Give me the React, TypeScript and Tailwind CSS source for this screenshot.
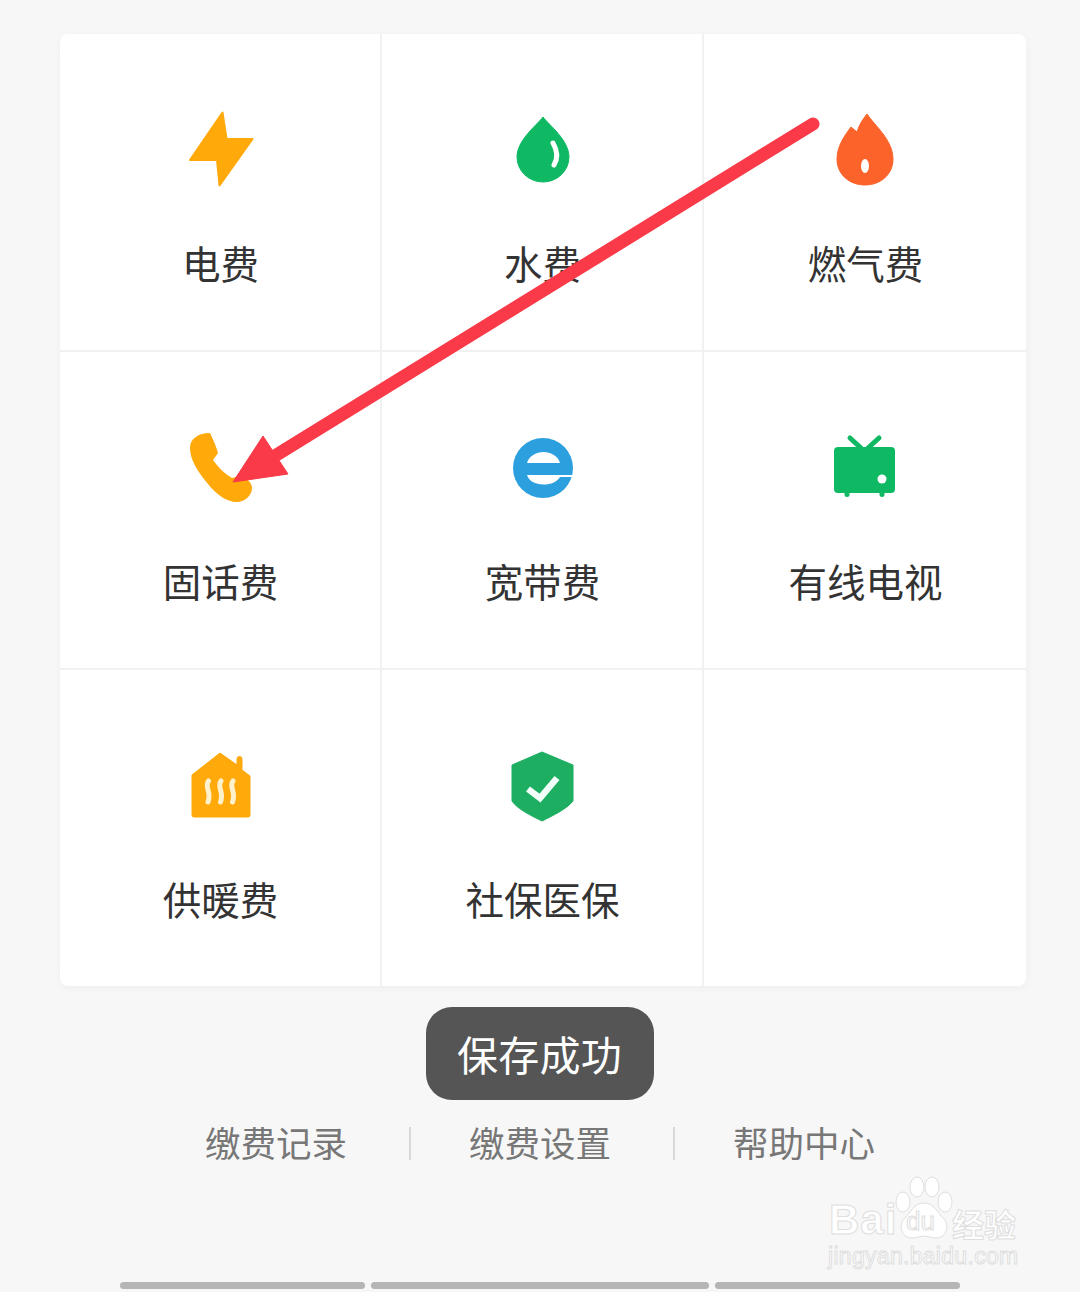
const ORANGE = '#ffa90a';
const GREEN = '#0fb964';

function BoltIcon() {
  return (
    <svg viewBox="0 0 80 80" className="h-20 w-20">
      <path d="M42.5 2.5 46.5 29H72.5L39.5 75.5 37 50H10Z" fill={ORANGE} stroke={ORANGE} strokeWidth={2} strokeLinejoin="round" />
    </svg>
  );
}

function WaterIcon() {
  return (
    <svg viewBox="0 0 80 80" className="h-20 w-20">
      <path d="M41 7C47 15 67 30 67 47A26 25 0 0 1 15 47C15 30 35 15 41 7Z" fill={GREEN} stroke={GREEN} strokeWidth={1} strokeLinejoin="round" />
      <path d="M51 33Q58 45 52 55" fill="none" stroke="#fff" strokeWidth={5} strokeLinecap="round" />
    </svg>
  );
}

function FlameIcon() {
  return (
    <svg viewBox="0 0 80 80" className="h-20 w-20">
      <path d="M42 4C50 16 68 30 68 49C68 65 55 75 40 75C25 75 12 65 12 49C12 36 20 25 26 17L32 22C34 15 38 9 42 4Z" fill="#fb632b" stroke="#fb632b" strokeWidth={1} strokeLinejoin="round" />
      <ellipse cx={40} cy={56} rx={4} ry={7} fill="#fff" />
    </svg>
  );
}

function PhoneIcon() {
  return (
    <svg viewBox="0 0 80 80" className="h-20 w-20">
      <path d="M10 18C10 9 18 3 30 3C33 9 36 16 38 23L33 30C38 37 45 44 52 48L60 46C66 48 72 52 72 58C72 66 64 72 57 72C46 72 36 64 28 54C18 42 10 30 10 18Z" fill={ORANGE} />
    </svg>
  );
}

function BroadbandIcon() {
  return (
    <svg viewBox="0 0 80 80" className="h-20 w-20">
      <circle cx={41} cy={38} r={30} fill="#2c9fdf" />
      <path d="M25 33H58C56 26 49 22 41.5 22C34 22 27 26 25 33Z" fill="#fff" />
      <path d="M25 45H72V47H58C55 52 49 54.5 41.5 54.5C33 54.5 27 51 25 45Z" fill="#fff" />
    </svg>
  );
}

function TvIcon() {
  return (
    <svg viewBox="0 0 80 80" className="h-20 w-20">
      <path d="M25 8 36 18M54 8 43 18" stroke={GREEN} strokeWidth={5} strokeLinecap="round" />
      <rect x={9} y={17} width={61} height={46} rx={4} fill={GREEN} />
      <rect x={19.5} y={60} width={5} height={7} rx={2.5} fill={GREEN} />
      <rect x={54.5} y={60} width={5} height={7} rx={2.5} fill={GREEN} />
      <circle cx={57} cy={49} r={4.5} fill="#fff" />
    </svg>
  );
}

function HeatIcon() {
  return (
    <svg viewBox="0 0 80 80" className="h-20 w-20">
      <path d="M40 3 57 15V9A2.5 2.5 0 0 1 62 9V20L70 26V65A2 2 0 0 1 68 67H14A2 2 0 0 1 12 65V25Z" fill={ORANGE} stroke={ORANGE} strokeWidth={1} strokeLinejoin="round" />
      <path d="M28.5 31C24 37 32 42 28 52M41 31C36.5 37 44.5 42 40.5 52M53 31C48.5 37 56.5 42 52.5 52" fill="none" stroke="#fff1cc" strokeWidth={5} strokeLinecap="round" />
    </svg>
  );
}

function ShieldIcon() {
  return (
    <svg viewBox="0 0 80 80" className="h-20 w-20">
      <path d="M40 2 71 15V51C65 59 50 66 40 71C30 66 15 59 10 51V15Z" fill="#1eae62" stroke="#1eae62" strokeWidth={1} strokeLinejoin="round" />
      <path d="M26 39 38 48 55 28" fill="none" stroke="#f2fff8" strokeWidth={6.5} />
    </svg>
  );
}

const ITEMS = [
  { label: '电费', icon: <BoltIcon /> },
  { label: '水费', icon: <WaterIcon /> },
  { label: '燃气费', icon: <FlameIcon /> },
  { label: '固话费', icon: <PhoneIcon /> },
  { label: '宽带费', icon: <BroadbandIcon /> },
  { label: '有线电视', icon: <TvIcon /> },
  { label: '供暖费', icon: <HeatIcon /> },
  { label: '社保医保', icon: <ShieldIcon /> },
];

function Arrow() {
  return (
    <svg viewBox="0 0 1080 1292" className="pointer-events-none absolute inset-0 h-[1292px] w-[1080px]">
      <path d="M813 124 265 462" stroke="#fa3a48" strokeWidth={13} strokeLinecap="round" />
      <path d="M233 482 263 436 288 474Z" fill="#fa3a48" stroke="#fa3a48" strokeWidth={1} strokeLinejoin="round" />
    </svg>
  );
}

function Watermark() {
  return (
    <div className="pointer-events-none absolute left-[826px] top-[1176px] h-[96px] w-[200px] font-['Liberation_Sans',sans-serif] text-white [-webkit-text-stroke:1px_#dedede]">
      <svg viewBox="0 0 60 66" className="absolute left-[68px] top-0 h-[66px] w-[60px]">
        <g fill="#fff" stroke="#dedede" strokeWidth={1}>
          <ellipse cx={9} cy={26} rx={7} ry={10} />
          <ellipse cx={23} cy={11} rx={7} ry={10} />
          <ellipse cx={38} cy={11} rx={7} ry={10} />
          <ellipse cx={51} cy={26} rx={7} ry={10} />
          <path d="M30 27C40 27 43 36 50 43C56 50 52 62 42 62C37 62 34 60 30 60C26 60 23 62 18 62C8 62 4 50 10 43C17 36 20 27 30 27Z" />
        </g>
      </svg>
      <span className="absolute left-[3px] top-[21px] text-[42px] font-bold leading-[46px] tracking-[1px]">Bai</span>
      <span className="absolute left-[80px] top-[30px] text-[26px] leading-[30px]">du</span>
      <span className="absolute left-[126px] top-[30px] font-['Noto_Sans_CJK_SC',sans-serif] text-[32px] font-bold leading-[34px]">经验</span>
      <span className="absolute left-[2px] top-[68px] text-[23px] leading-[25px] tracking-[0.3px]">jingyan.baidu.com</span>
    </div>
  );
}

export default function App() {
  return (
    <div className="relative h-[1292px] w-[1080px] overflow-hidden bg-[#f7f7f7] font-['Noto_Sans_CJK_SC',sans-serif]">
      <div className="flex flex-col pt-[34px]">
        <div className="ml-[60px] grid w-[966px] grid-cols-[320px_320px_322px] grid-rows-[316px_316px_316px] gap-[2px] overflow-hidden rounded-lg bg-[#f1f1f1] shadow-[0_2px_10px_rgba(0,0,0,0.04)]">
          {ITEMS.map((item, i) => (
            <div key={item.label} className={`flex flex-col items-center bg-white ${i < 3 ? 'gap-[49px] pt-[76px]' : i < 6 ? 'gap-[47px] pt-[78px]' : 'gap-[45px] pt-[80px]'}`}>
              {item.icon}
              <span className="pl-[1px] text-[38.5px] leading-[46px] text-[#333]">{item.label}</span>
            </div>
          ))}
          <div className="bg-white" />
        </div>

        <div className="mt-[21px] flex justify-center pr-[1px]">
          <div className="flex h-[93px] w-[228px] items-center justify-center rounded-[26px] bg-[#555] text-[41px] tracking-[0.3px] text-white">
            保存成功
          </div>
        </div>

        <div className="mt-[19px] flex h-[46px] items-center pl-[205px] text-[35.5px] text-[#777]">
          <span>缴费记录</span>
          <span className="ml-[62px] mr-[58px] mt-[2px] h-[33px] w-[2px] bg-[#d8d8d8]" />
          <span>缴费设置</span>
          <span className="ml-[62px] mr-[58px] mt-[2px] h-[33px] w-[2px] bg-[#d8d8d8]" />
          <span>帮助中心</span>
        </div>

        <div className="mt-[117px] flex gap-[6px] pl-[120px]">
          <div className="h-[7px] w-[245px] rounded-full bg-[#b5b5b5]" />
          <div className="h-[7px] w-[338px] rounded-full bg-[#b5b5b5]" />
          <div className="h-[7px] w-[245px] rounded-full bg-[#b5b5b5]" />
        </div>
      </div>
      <Arrow />
      <Watermark />
    </div>
  );
}
